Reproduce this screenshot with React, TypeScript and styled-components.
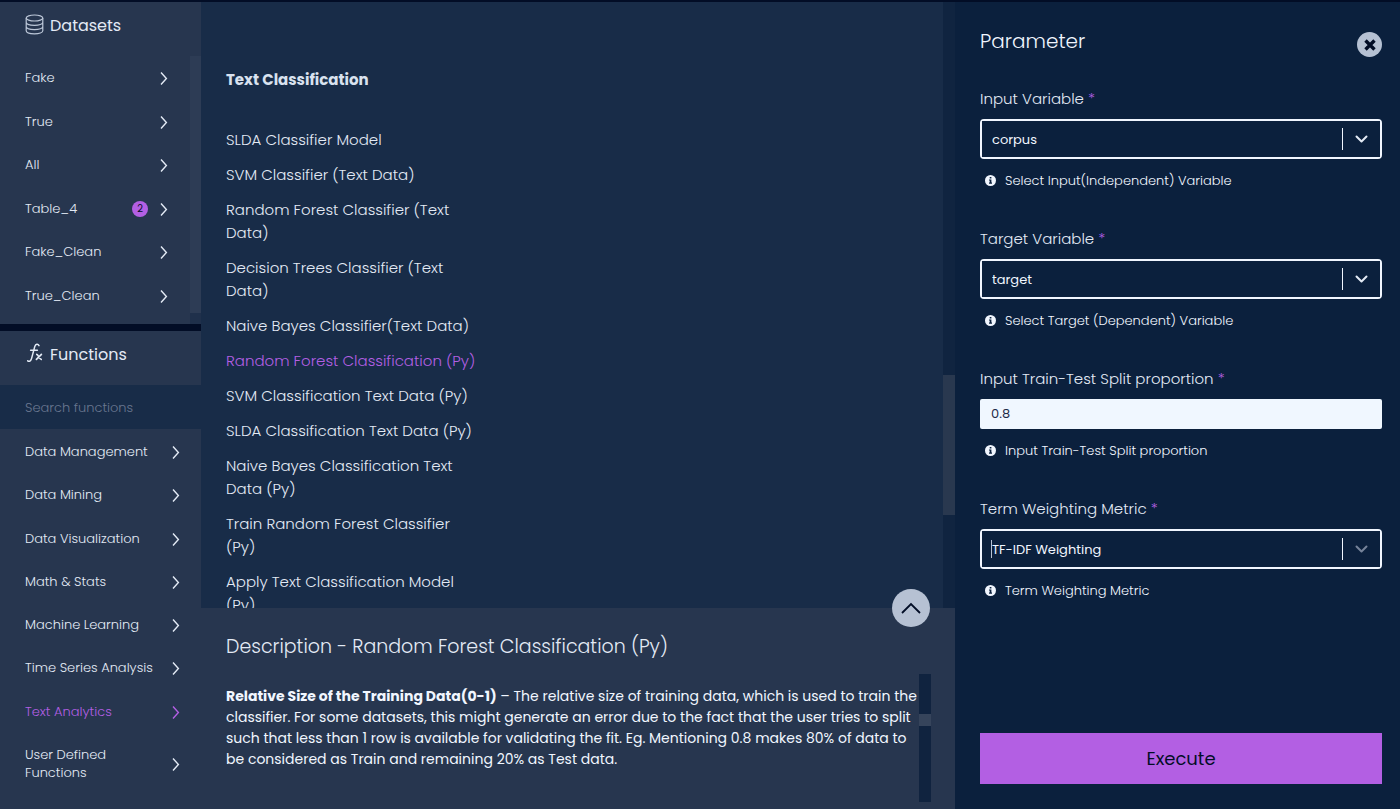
import React from "react";
import styled, { createGlobalStyle } from "styled-components";

const color = {
  ink: "#020d26",
  panel: "#27364f",
  main: "#182c48",
  deep: "#0b203d",
  trackEdge: "#1f304b",
  text: "#e3eaf5",
  bright: "#f1f6ff",
  muted: "#68768f",
  disc: "#b6c1d3",
  accent: "#b35fe3",
};

const GlobalStyle = createGlobalStyle`
  *, *::before, *::after { box-sizing: border-box; }
  body {
    margin: 0;
    background: ${color.deep};
    color: ${color.text};
    font-family: Poppins, Inter, "Open Sans", sans-serif;
    font-weight: 300;
  }
  button, input, select { font: inherit; color: inherit; }
  h1, h2, h3, p, ul { margin: 0; padding: 0; font-weight: inherit; }
  ul { list-style: none; }
`;

const Shell = styled.div`
  display: grid;
  grid-template-columns: 201px minmax(0, 1fr) 445px;
  height: 100vh;
  min-height: 760px;
  border-top: 2px solid ${color.ink};
`;

const Sidebar = styled.aside`
  display: flex;
  flex-direction: column;
  min-height: 0;
  background: ${color.panel};
`;

const SideSection = styled.section<{ $fill?: boolean }>`
  display: flex;
  flex-direction: column;
  flex: ${(p) => (p.$fill ? "1 1 0" : "0 0 329px")};
  min-height: 0;
  border-bottom: ${(p) => (p.$fill ? "0" : `7px solid ${color.ink}`)};
`;

const SideHeading = styled.h2`
  display: flex;
  align-items: center;
  gap: 6px;
  flex: none;
  height: 54px;
  padding: 0 25px 6px;
  font-size: 16px;
  font-weight: 400;
  line-height: 24px;
`;

const IconSlot = styled.span`
  display: flex;
  width: 19px;
  height: 24px;
  align-items: flex-start;
  justify-content: center;
`;

const SideBody = styled.div`
  display: flex;
  flex: 1;
  min-height: 0;
`;

const SideList = styled.ul<{ $functions?: boolean }>`
  display: flex;
  flex: 1;
  flex-direction: column;
  justify-content: space-between;
  padding: ${(p) => (p.$functions ? "14px 21px 27px 25px" : "13px 22px 19px 25px")};
`;

const SideItem = styled.button<{ $active?: boolean }>`
  display: flex;
  align-items: center;
  gap: 12px;
  width: 100%;
  padding: 0;
  border: 0;
  background: none;
  color: ${(p) => (p.$active ? color.accent : color.text)};
  font-size: 13px;
  line-height: 18px;
  text-align: left;
  cursor: pointer;
`;

const ItemLabel = styled.span`
  flex: 1;
`;

const CountBadge = styled.span`
  width: 16px;
  height: 16px;
  border-radius: 50%;
  background: ${color.accent};
  color: ${color.ink};
  font-size: 10px;
  font-weight: 400;
  line-height: 16px;
  text-align: center;
`;

const ScrollTrack = styled.div<{ $w: number; $bg: string }>`
  display: flex;
  flex: none;
  flex-direction: column;
  width: ${(p) => p.$w}px;
  background: ${(p) => p.$bg};
`;

const ScrollThumb = styled.div<{ $size: number; $bg: string }>`
  flex: ${(p) => p.$size} 1 0;
  background: ${(p) => p.$bg};
`;

const ScrollSpace = styled.div<{ $grow: number }>`
  flex: ${(p) => p.$grow} 1 0;
`;

const SearchInput = styled.input`
  flex: none;
  width: 100%;
  height: 44px;
  padding: 2px 25px 0;
  border: 0;
  outline: 0;
  background: ${color.main};
  font-size: 13px;
  &::placeholder { color: ${color.muted}; opacity: 1; }
`;

const Main = styled.main`
  display: flex;
  flex-direction: column;
  min-height: 0;
  background: ${color.main};
`;

const ListPane = styled.section`
  display: flex;
  flex: 1;
  min-height: 0;
  overflow: hidden;
`;

const ListContent = styled.div`
  flex: 1;
  min-width: 0;
  padding: 66px 25px 0;
`;

const GroupTitle = styled.h2`
  margin-bottom: 37px;
  font-size: 15px;
  font-weight: 700;
  line-height: 23px;
  color: #d9e2ef;
`;

const MethodList = styled.ul`
  display: flex;
  flex-direction: column;
  gap: 12px;
  width: 254px;
`;

const Method = styled.button<{ $active?: boolean }>`
  display: block;
  padding: 0;
  border: 0;
  background: none;
  color: ${(p) => (p.$active ? color.accent : color.text)};
  font-size: 15px;
  line-height: 23px;
  text-align: left;
  cursor: pointer;
`;

const Description = styled.section`
  position: relative;
  flex: none;
  height: 201px;
  padding: 24px 24px 7px 25px;
  background: ${color.panel};
`;

const DescriptionTitle = styled.h2`
  margin-bottom: 12px;
  font-size: 19px;
  line-height: 30px;
`;

const DescriptionBody = styled.div`
  display: flex;
  height: 128px;
  justify-content: space-between;
`;

const DescriptionText = styled.p`
  flex: 1;
  padding-top: 12px;
  font-size: 14px;
  font-weight: 400;
  line-height: 21px;
  color: ${color.bright};
`;

const Collapse = styled.button`
  position: absolute;
  top: -19px;
  right: 25px;
  display: flex;
  align-items: center;
  justify-content: center;
  width: 38px;
  height: 38px;
  padding: 0;
  border: 0;
  border-radius: 50%;
  background: ${color.disc};
  color: ${color.ink};
  cursor: pointer;
`;

const Panel = styled.form`
  display: flex;
  flex-direction: column;
  padding: 24px 18px 25px 25px;
  background: ${color.deep};
`;

const PanelHeader = styled.header`
  display: flex;
  align-items: flex-start;
  justify-content: space-between;
  height: 61px;
`;

const PanelTitle = styled.h1`
  font-size: 20px;
  line-height: 30px;
  color: ${color.bright};
`;

const Close = styled.button`
  display: flex;
  align-items: center;
  justify-content: center;
  width: 25px;
  height: 25px;
  margin-top: 6px;
  padding: 0;
  border: 0;
  border-radius: 50%;
  background: ${color.disc};
  color: ${color.ink};
  cursor: pointer;
`;

const Fields = styled.div`
  display: flex;
  flex-direction: column;
  gap: 36px;
`;

const FieldBox = styled.div`
  display: flex;
  flex-direction: column;
`;

const Label = styled.label`
  margin-bottom: 8px;
  font-size: 15px;
  line-height: 24px;
`;

const Required = styled.span`
  color: ${color.accent};
`;

const SelectFrame = styled.div`
  position: relative;
  display: flex;
  align-items: center;
  height: 40px;
  border: 2px solid ${color.bright};
  border-radius: 4px;
`;

const Select = styled.select`
  width: 100%;
  height: 36px;
  padding: 0 48px 0 10px;
  border: 0;
  outline: 0;
  appearance: none;
  background: ${color.deep};
  color: ${color.bright};
  font-size: 13px;
  font-weight: 400;
`;

const Indicator = styled.span<{ $dim?: boolean }>`
  position: absolute;
  right: 0;
  display: flex;
  align-items: center;
  justify-content: center;
  width: 38px;
  height: 22px;
  border-left: 1px solid ${color.bright};
  color: ${(p) => (p.$dim ? "#76839a" : color.text)};
  pointer-events: none;
`;

const Caret = styled.span`
  position: absolute;
  left: 9px;
  width: 1px;
  height: 18px;
  background: ${color.disc};
`;

const TextInput = styled.input`
  height: 30px;
  padding: 0 11px;
  border: 0;
  border-radius: 2px;
  outline: 0;
  background: #f0f7ff;
  color: #1c2b47;
  font-size: 13px;
  font-weight: 400;
`;

const Help = styled.p`
  display: flex;
  align-items: center;
  gap: 9px;
  margin-top: 12px;
  padding-left: 5px;
  color: ${color.bright};
  font-size: 13px;
  line-height: 20px;
`;

const Execute = styled.button`
  height: 51px;
  margin-top: auto;
  border: 0;
  background: ${color.accent};
  color: ${color.ink};
  font-size: 18px;
  font-weight: 400;
  cursor: pointer;
`;

const Arrow = () => (
  <svg width="8" height="14" viewBox="0 0 8 14" fill="none" stroke="currentColor" strokeWidth="1.4" aria-hidden="true">
    <path d="M1 1.5l5.4 6L1 13.5" />
  </svg>
);

const DatabaseIcon = () => (
  <svg width="19" height="21" viewBox="0 0 19 21" fill="none" stroke="#bcc7d8" strokeWidth="1.2" aria-hidden="true">
    <ellipse cx="9.5" cy="4" rx="8.3" ry="3" />
    <path d="M1.2 4v12.8c0 1.8 3.7 3 8.3 3s8.3-1.2 8.3-3V4M1.2 8.3c0 1.8 3.7 3 8.3 3s8.3-1.2 8.3-3M1.2 12.6c0 1.8 3.7 3 8.3 3s8.3-1.2 8.3-3" />
  </svg>
);

const FunctionIcon = () => (
  <svg width="19" height="20" viewBox="0 0 19 20" fill="none" stroke="currentColor" strokeLinecap="round" aria-hidden="true">
    <path strokeWidth="1.5" d="M14 2.6C13 .8 10.700 .8 9.800 3.400L6.600 15.400C5.900 18 4.200 19 2.700 17.800M5.600 7.200h6.800" />
    <path strokeWidth="1.7" d="M11.800 11.400c1.400 0 2.600 5 4.400 5M16.400 11.400l-5 5" />
  </svg>
);

const InfoIcon = () => (
  <svg width="11" height="12" viewBox="0 0 11 12" aria-hidden="true">
    <circle cx="5.5" cy="5.5" r="5.5" fill={color.bright} />
    <path d="M4.7 1.9h1.7v1.6H4.700zM4 4.500h2.400v3H7v1.200H4V7.500h.7V5.600H4z" fill={color.deep} />
  </svg>
);

const datasets = [
  { name: "Fake" },
  { name: "True" },
  { name: "All" },
  { name: "Table_4", count: 2 },
  { name: "Fake_Clean" },
  { name: "True_Clean" },
];

const functions = [
  "Data Management",
  "Data Mining",
  "Data Visualization",
  "Math & Stats",
  "Machine Learning",
  "Time Series Analysis",
  "Text Analytics",
  "User Defined Functions",
];

const methods = [
  "SLDA Classifier Model",
  "SVM Classifier (Text Data)",
  "Random Forest Classifier (Text Data)",
  "Decision Trees Classifier (Text Data)",
  "Naive Bayes Classifier(Text Data)",
  "Random Forest Classification (Py)",
  "SVM Classification Text Data (Py)",
  "SLDA Classification Text Data (Py)",
  "Naive Bayes Classification Text Data (Py)",
  "Train Random Forest Classifier (Py)",
  "Apply Text Classification Model (Py)",
];

type ScrollProps = { width: number; track: string; thumb: string; before: number; size: number; after: number };

const Scrollbar = ({ width, track, thumb, before, size, after }: ScrollProps) => (
  <ScrollTrack $w={width} $bg={track} aria-hidden="true">
    <ScrollSpace $grow={before} />
    <ScrollThumb $size={size} $bg={thumb} />
    <ScrollSpace $grow={after} />
  </ScrollTrack>
);

type FieldProps = { id: string; label: string; help: string; children: React.ReactNode };

const Field = ({ id, label, help, children }: FieldProps) => (
  <FieldBox>
    <Label htmlFor={id}>
      {label} <Required>*</Required>
    </Label>
    {children}
    <Help>
      <InfoIcon />
      {help}
    </Help>
  </FieldBox>
);

const Dropdown = ({ id, value, focused }: { id: string; value: string; focused?: boolean }) => (
  <SelectFrame>
    <Select id={id} defaultValue={value}>
      <option>{value}</option>
    </Select>
    {focused && <Caret />}
    <Indicator $dim={focused}>
      <svg width="13" height="8" viewBox="0 0 13 8" fill="none" stroke="currentColor" strokeWidth="2" strokeLinecap="round" strokeLinejoin="round" aria-hidden="true">
        <path d="M1.5 1.5l5 5 5-5" />
      </svg>
    </Indicator>
  </SelectFrame>
);

export default function App() {
  return (
    <>
      <GlobalStyle />
      <Shell>
        <Sidebar>
          <SideSection>
            <SideHeading>
              <IconSlot><DatabaseIcon /></IconSlot>
              Datasets
            </SideHeading>
            <SideBody>
              <SideList>
                {datasets.map((d) => (
                  <li key={d.name}>
                    <SideItem type="button">
                      <ItemLabel>{d.name}</ItemLabel>
                      {d.count && <CountBadge>{d.count}</CountBadge>}
                      <Arrow />
                    </SideItem>
                  </li>
                ))}
              </SideList>
              <Scrollbar width={11} track={color.trackEdge} thumb="#2d3c55" before={0} size={257} after={11} />
            </SideBody>
          </SideSection>
          <SideSection $fill>
            <SideHeading>
              <IconSlot><FunctionIcon /></IconSlot>
              Functions
            </SideHeading>
            <SearchInput type="search" aria-label="Search functions" placeholder="Search functions" />
            <SideList $functions>
              {functions.map((name) => (
                <li key={name}>
                  <SideItem type="button" $active={name === "Text Analytics"}>
                    <ItemLabel>{name}</ItemLabel>
                    <Arrow />
                  </SideItem>
                </li>
              ))}
            </SideList>
          </SideSection>
        </Sidebar>

        <Main>
          <ListPane>
            <ListContent>
              <GroupTitle>Text Classification</GroupTitle>
              <MethodList>
                {methods.map((name) => (
                  <li key={name}>
                    <Method type="button" $active={name === "Random Forest Classification (Py)"}>{name}</Method>
                  </li>
                ))}
              </MethodList>
            </ListContent>
            <Scrollbar width={12} track="#102440" thumb="#29384f" before={373} size={140} after={93} />
          </ListPane>
          <Description>
            <Collapse type="button" aria-label="Collapse description">
              <svg width="20" height="12" viewBox="0 0 20 12" fill="none" stroke="currentColor" strokeWidth="1.8" aria-hidden="true">
                <path d="M1 11l9-9 9 9" />
              </svg>
            </Collapse>
            <DescriptionTitle>Description - Random Forest Classification (Py)</DescriptionTitle>
            <DescriptionBody>
              <DescriptionText>
                <strong>Relative Size of the Training Data(0-1)</strong> – The relative size of training data, which is used to train the
                classifier. For some datasets, this might generate an error due to the fact that the user tries to split such that
                less than 1 row is available for validating the fit. Eg. Mentioning 0.8 makes 80% of data to be considered as Train
                and remaining 20% as Test data.
              </DescriptionText>
              <Scrollbar width={12} track="#10233f" thumb="#36445b" before={40} size={12} after={76} />
            </DescriptionBody>
          </Description>
        </Main>

        <Panel onSubmit={(e) => e.preventDefault()}>
          <PanelHeader>
            <PanelTitle>Parameter</PanelTitle>
            <Close type="button" aria-label="Close">
              <svg width="12" height="12" viewBox="0 0 12 12" fill="none" stroke="currentColor" strokeWidth="3.4" aria-hidden="true">
                <path d="M1.5 1.5l9 9M10.500 1.500l-9 9" />
              </svg>
            </Close>
          </PanelHeader>
          <Fields>
            <Field id="input-variable" label="Input Variable" help="Select Input(Independent) Variable">
              <Dropdown id="input-variable" value="corpus" />
            </Field>
            <Field id="target-variable" label="Target Variable" help="Select Target (Dependent) Variable">
              <Dropdown id="target-variable" value="target" />
            </Field>
            <Field id="split" label="Input Train-Test Split proportion" help="Input Train-Test Split proportion">
              <TextInput id="split" type="text" defaultValue="0.8" />
            </Field>
            <Field id="metric" label="Term Weighting Metric" help="Term Weighting Metric">
              <Dropdown id="metric" value="TF-IDF Weighting" focused />
            </Field>
          </Fields>
          <Execute type="submit">Execute</Execute>
        </Panel>
      </Shell>
    </>
  );
}
